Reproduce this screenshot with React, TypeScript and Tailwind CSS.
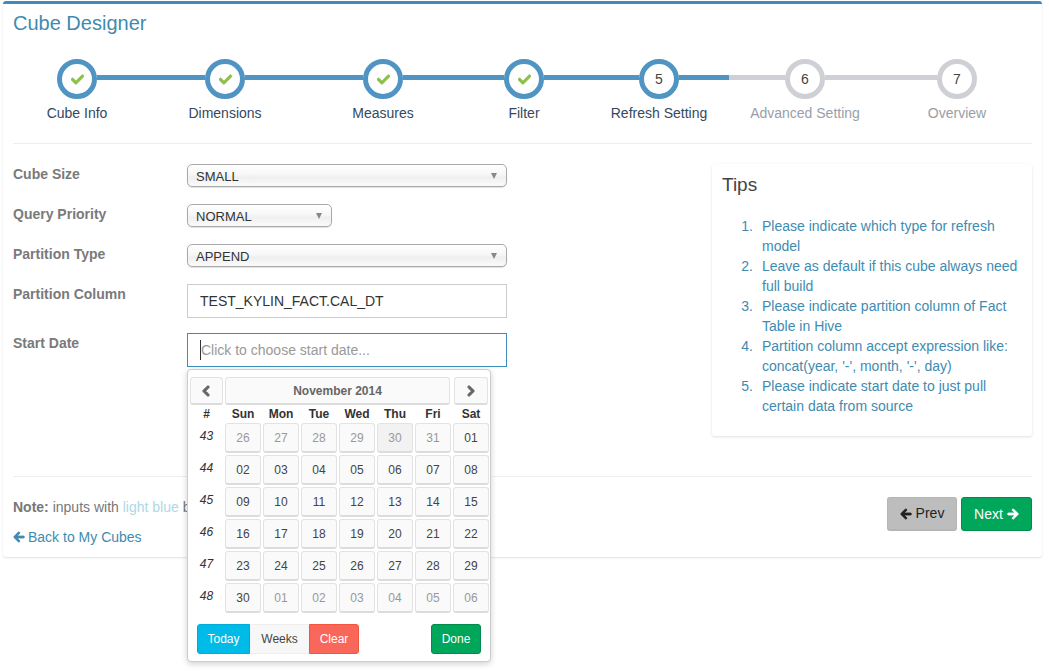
import { FaArrowLeft, FaArrowRight, FaCheck, FaChevronLeft, FaChevronRight } from "react-icons/fa";

const steps = [
  { label: "Cube Info", w: "w-[128px]", l: "w-[44px] bg-transparent", r: "w-[44px] bg-[#4f94c3]", ring: "border-[#4f94c3]", text: "text-[#34495e]", done: true, n: "1" },
  { label: "Dimensions", w: "w-[168px]", l: "w-[64px] bg-[#4f94c3]", r: "w-[64px] bg-[#4f94c3]", ring: "border-[#4f94c3]", text: "text-[#34495e]", done: true, n: "2" },
  { label: "Measures", w: "w-[148px]", l: "w-[54px] bg-[#4f94c3]", r: "w-[54px] bg-[#4f94c3]", ring: "border-[#4f94c3]", text: "text-[#34495e]", done: true, n: "3" },
  { label: "Filter", w: "w-[134px]", l: "w-[47px] bg-[#4f94c3]", r: "w-[47px] bg-[#4f94c3]", ring: "border-[#4f94c3]", text: "text-[#34495e]", done: true, n: "4" },
  { label: "Refresh Setting", w: "w-[138px]", l: "w-[48px] bg-[#4f94c3]", r: "w-[50px] bg-[#4f94c3]", ring: "border-[#4f94c3]", text: "text-[#34495e]", done: false, n: "5" },
  { label: "Advanced Setting", w: "w-[154px]", l: "w-[56px] bg-[#ced0d5]", r: "w-[58px] bg-[#ced0d5]", ring: "border-[#ced0d5]", text: "text-[#999ea8]", done: false, n: "6" },
  { label: "Overview", w: "w-[148px]", l: "w-[54px] bg-[#ced0d5]", r: "w-[54px] bg-transparent", ring: "border-[#ced0d5]", text: "text-[#999ea8]", done: false, n: "7" },
];

const weeks: { n: string; days: string[] }[] = [
  { n: "43", days: ["26", "27", "28", "29", "30", "31", "01"] },
  { n: "44", days: ["02", "03", "04", "05", "06", "07", "08"] },
  { n: "45", days: ["09", "10", "11", "12", "13", "14", "15"] },
  { n: "46", days: ["16", "17", "18", "19", "20", "21", "22"] },
  { n: "47", days: ["23", "24", "25", "26", "27", "28", "29"] },
  { n: "48", days: ["30", "01", "02", "03", "04", "05", "06"] },
];

const tips = [
  "Please indicate which type for refresh model",
  "Leave as default if this cube always need full build",
  "Please indicate partition column of Fact Table in Hive",
  "Partition column accept expression like: concat(year, '-', month, '-', day)",
  "Please indicate start date to just pull certain data from source",
];

function MacSelect({ value, width }: { value: string; width: string }) {
  return (
    <div className={`${width} h-[23px] flex items-center justify-between pl-[8px] pr-[9px] border border-[#a9a9a9] rounded-[5px] bg-[linear-gradient(#ffffff,#f7f7f7_45%,#efefef_60%,#fbfbfb)] shadow-[0_1px_1px_rgba(0,0,0,0.12)] text-[13px] text-[#333] leading-none`}>
      <span className="pt-[1px]">{value}</span>
      <span className="w-0 h-0 border-x-[3.5px] border-x-transparent border-t-[6px] border-t-[#888]" />
    </div>
  );
}

function Row({ label, h, children }: { label: string; h: string; children: React.ReactNode }) {
  return (
    <div className={`flex items-start ${h}`}>
      <div className="w-[174px] text-[14px] leading-[20px] font-bold text-[#7a7a7a]">{label}</div>
      {children}
    </div>
  );
}

const dayBtn = "h-[30px] flex items-center justify-center rounded-[3px] border border-[#e3e3e3] border-b-2 border-b-[#dcdcdc] bg-[#fafafa] text-[12px]";

function Calendar() {
  return (
    <div className="absolute left-0 top-[36px] z-10 w-[304px] h-[293px] bg-white border border-[#ccc] rounded-[4px] shadow-[0_2px_6px_rgba(0,0,0,0.18)] pt-[7px] px-[1px]">
      <div className="flex h-[28px] pl-[1px] pr-[1px] text-[#666]">
        <div className={`${dayBtn} !h-[28px] w-[33px] text-[#666]`}><FaChevronLeft size={12} stroke="currentColor" strokeWidth={50} /></div>
        <div className={`${dayBtn} !h-[28px] w-[226px] ml-[2px] font-bold text-[#666]`}>November 2014</div>
        <div className={`${dayBtn} !h-[28px] w-[34px] ml-[4px] text-[#666]`}><FaChevronRight size={12} stroke="currentColor" strokeWidth={50} /></div>
      </div>
      <div className="grid grid-cols-[33px_repeat(7,36px)] gap-x-[2px] gap-y-[2px] mt-[1px] pl-[1px]">
        {["#", "Sun", "Mon", "Tue", "Wed", "Thu", "Fri", "Sat"].map((d) => (
          <div key={d} className="h-[15px] flex items-center justify-center text-[12px] font-bold text-[#333]">{d}</div>
        ))}
        {weeks.map((w, wi) => (
          <div key={w.n} className="contents">
            <div className="h-[30px] flex items-center justify-center pb-[4px] text-[12px] italic text-[#333]">{w.n}</div>
            {w.days.map((d, di) => {
              const muted = (wi === 0 && di < 6) || (wi === 5 && di > 0);
              const active = wi === 0 && di === 4;
              return (
                <div key={d + di} className={`${dayBtn} ${muted ? "text-[#999]" : "text-[#444]"} ${active ? "!bg-[#f2f2f2]" : ""}`}>{d}</div>
              );
            })}
          </div>
        ))}
      </div>
      <div className="flex justify-between mt-[11px] px-[8px] text-[12px]">
        <div className="flex">
          <div className="w-[53px] h-[30px] flex items-center justify-center bg-[#00bbe8] border border-[#00acd6] rounded-l-[3px] text-white">Today</div>
          <div className="w-[59px] h-[30px] flex items-center justify-center bg-[#f7f7f7] border-y border-[#eee] text-[#444]">Weeks</div>
          <div className="w-[50px] h-[30px] flex items-center justify-center bg-[#f9665a] border border-[#f4543c] rounded-r-[3px] text-white">Clear</div>
        </div>
        <div className="w-[50px] h-[30px] flex items-center justify-center bg-[#00a65a] border border-[#008d4c] rounded-[3px] text-white">Done</div>
      </div>
    </div>
  );
}

export default function App() {
  return (
    <div className="min-h-[671px] bg-white pt-[1px] pl-[3px] font-['Liberation_Sans',Arial,sans-serif]">
      <div className="w-[1039px] h-[556px] bg-white border-t-[3px] border-[#3c8dbc] rounded-[3px] shadow-[0_1px_2px_rgba(0,0,0,0.12)] px-[10px]">
        <h1 className="h-[38px] flex items-center text-[20px] font-normal text-[#3f8bb0]">Cube Designer</h1>

        <div className="flex mt-[17px]">
          {steps.map((s) => (
            <div key={s.label} className={`${s.w} flex flex-col`}>
              <div className="flex items-start h-[40px]">
                <div className={`${s.l} h-[5px] mt-[16px]`} />
                <div className={`w-[40px] h-[40px] shrink-0 rounded-full border-[5px] ${s.ring} bg-white flex items-center justify-center text-[14px] text-[#444]`}>
                  {s.done ? <FaCheck size={13} stroke="currentColor" strokeWidth={30} className="text-[#8cc04b]" /> : s.n}
                </div>
                <div className={`${s.r} h-[5px] mt-[16px]`} />
              </div>
            </div>
          ))}
        </div>
        <div className="flex mt-[4px]">
          {steps.map((s, i) => (
            <div key={s.label} className={`${i === 4 ? "w-[136px]" : i === 5 ? "w-[156px]" : s.w} text-center text-[14px] leading-[20px] ${s.text}`}>{s.label}</div>
          ))}
        </div>

        <div className="h-px bg-[#eee] mt-[20px]" />

        <div className="flex mt-[20px] h-[312px]">
          <div className="w-[699px]">
            <Row label="Cube Size" h="h-[40px]"><MacSelect value="SMALL" width="w-[320px]" /></Row>
            <Row label="Query Priority" h="h-[40px]"><MacSelect value="NORMAL" width="w-[145px]" /></Row>
            <Row label="Partition Type" h="h-[40px]"><MacSelect value="APPEND" width="w-[320px]" /></Row>
            <Row label="Partition Column" h="h-[49px]">
              <div className="w-[320px] h-[34px] flex items-center border border-[#ccc] px-[12px] text-[14px] text-[#333]">TEST_KYLIN_FACT.CAL_DT</div>
            </Row>
            <Row label="Start Date" h="h-[34px]">
              <div className="relative w-[320px]">
                <div className="h-[34px] flex items-center border border-[#3c8dbc] pl-[12px] text-[14px] text-[#999]">
                  <span className="w-px h-[20px] bg-[#333] shrink-0" />
                  <span>Click to choose start date...</span>
                </div>
                <Calendar />
              </div>
            </Row>
          </div>
          <div className="w-[320px] h-[272px] bg-white rounded-[3px] shadow-[0_1px_3px_rgba(0,0,0,0.12)] px-[10px] pt-[10px]">
            <h3 className="text-[19px] leading-[22px] font-normal text-[#444]">Tips</h3>
            <ol className="mt-[20px] text-[14px] leading-[20px] text-[#3f8bb0]">
              {tips.map((t, i) => (
                <li key={t} className="flex">
                  <span className="w-[31px] mr-[9px] shrink-0 text-right">{i + 1}.</span>
                  <span>{t}</span>
                </li>
              ))}
            </ol>
          </div>
        </div>

        <div className="h-px bg-[#eee]" />

        <div className="flex justify-between pt-[20px]">
          <div className="text-[14px] leading-[20px]">
            <p className="text-[#777]"><b>Note:</b> inputs with <span className="text-[#add8e6]">light blue</span> b</p>
            <p className="mt-[10px] flex items-center gap-[3px] text-[#3f8bb0]"><FaArrowLeft size={12} stroke="currentColor" strokeWidth={40} />Back to My Cubes</p>
          </div>
          <div className="flex gap-[4px] text-[14px]">
            <div className="w-[70px] h-[34px] flex items-center justify-center gap-[4px] bg-[#bdbdbd] border border-[#b5b5b5] border-b-2 rounded-[3px] text-[#222]"><FaArrowLeft size={12} stroke="currentColor" strokeWidth={40} />Prev</div>
            <div className="w-[71px] h-[34px] flex items-center justify-center gap-[4px] bg-[#00a65a] border border-[#008d4c] rounded-[3px] text-white">Next<FaArrowRight size={12} stroke="currentColor" strokeWidth={40} /></div>
          </div>
        </div>
      </div>
    </div>
  );
}
